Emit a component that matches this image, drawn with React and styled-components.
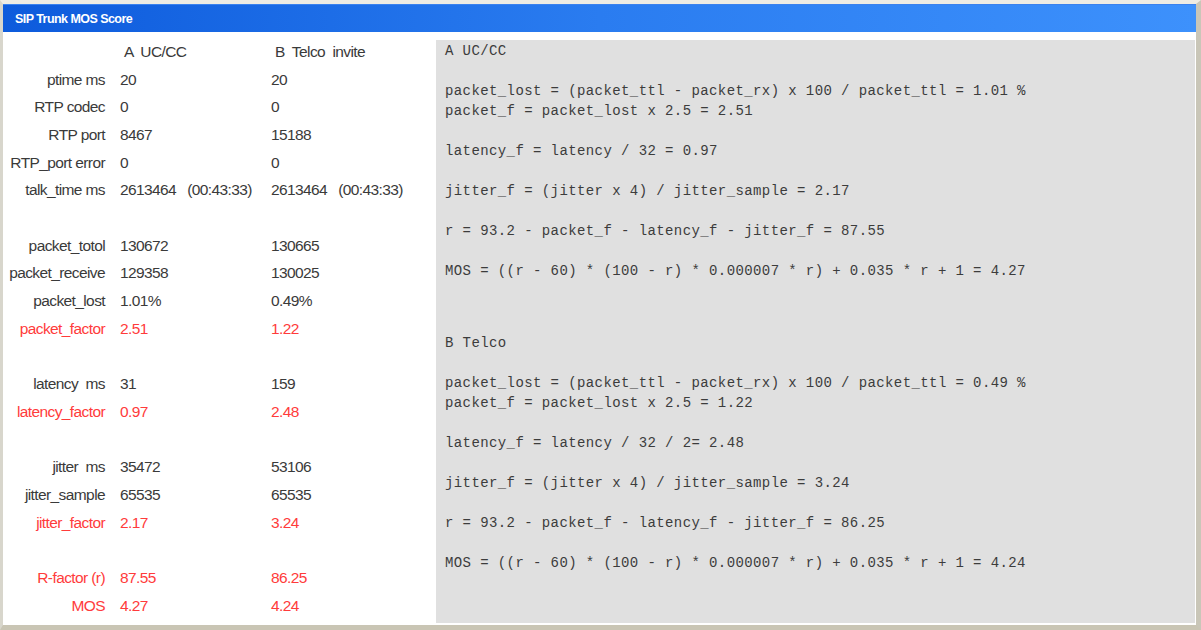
import React from "react";
import styled, { createGlobalStyle } from "styled-components";

const GlobalStyle = createGlobalStyle`
  html, body {
    margin: 0;
    padding: 0;
    background: #ece9d8;
  }
`;

const Frame = styled.div`
  width: 1201px;
  height: 630px;
  box-sizing: border-box;
  display: flex;
  flex-direction: column;
  background: #ece9d8;
  border-top: 4px solid #eeece4;
  border-left: 3px solid #d8d6cc;
  border-right: 5px solid #c9c6b8;
  border-bottom: 5px solid #c9c5b4;
`;

const TitleBar = styled.div`
  height: 28px;
  display: flex;
  align-items: center;
  padding-left: 12px;
  background: linear-gradient(to right, #0d5bdc, #2a7cf0 50%, #3d91fc);
  border-top: 1px solid #3b82ee;
  box-sizing: border-box;
  color: #fff;
  font-family: "Liberation Sans", Arial, sans-serif;
  font-weight: bold;
  font-size: 12.5px;
  letter-spacing: -0.55px;
`;

const Body = styled.div`
  flex: 1;
  display: flex;
  background: #fff;
  min-height: 0;
`;

const Table = styled.div`
  width: 433px;
  flex-shrink: 0;
  padding-top: 6px;
  display: grid;
  grid-template-columns: 102px 136px 1fr;
  grid-auto-rows: 27.7px;
  column-gap: 15px;
  align-content: start;
  font-family: "Liberation Sans", Arial, sans-serif;
  font-size: 15.5px;
  letter-spacing: -0.6px;
  color: #3a3a3a;
`;

const Cell = styled.div`
  display: flex;
  align-items: center;
  white-space: pre;
  color: ${(p) => (p.$red ? "#ff3b3b" : "#3a3a3a")};
  justify-content: ${(p) => (p.$label ? "flex-end" : "flex-start")};
  padding-left: ${(p) => (p.$head ? "4px" : "0")};
`;

const Blank = styled.div`
  grid-column: 1 / -1;
`;

const Formulas = styled.div`
  flex: 1;
  margin: 8px 1px 2px 0;
  padding: 1px 9px 0;
  background: #e0e0e0;
  font-family: "Liberation Mono", "Courier New", monospace;
  font-size: 14px;
  letter-spacing: 0.4px;
  line-height: 20px;
  color: #3c3c3c;
`;

const Section = styled.div`
  white-space: pre;
  margin-bottom: 52px;
`;

const rows = [
  ["ptime ms", "20", "20"],
  ["RTP codec", "0", "0"],
  ["RTP port", "8467", "15188"],
  ["RTP_port error", "0", "0"],
  ["talk_time ms", "2613464   (00:43:33)", "2613464   (00:43:33)"],
  null,
  ["packet_totol", "130672", "130665"],
  ["packet_receive", "129358", "130025"],
  ["packet_lost", "1.01%", "0.49%"],
  ["packet_factor", "2.51", "1.22", true],
  null,
  ["latency  ms", "31", "159"],
  ["latency_factor", "0.97", "2.48", true],
  null,
  ["jitter  ms", "35472", "53106"],
  ["jitter_sample", "65535", "65535"],
  ["jitter_factor", "2.17", "3.24", true],
  null,
  ["R-factor (r)", "87.55", "86.25", true],
  ["MOS", "4.27", "4.24", true],
];

const sectionA = `A UC/CC

packet_lost = (packet_ttl - packet_rx) x 100 / packet_ttl = 1.01 %
packet_f = packet_lost x 2.5 = 2.51

latency_f = latency / 32 = 0.97

jitter_f = (jitter x 4) / jitter_sample = 2.17

r = 93.2 - packet_f - latency_f - jitter_f = 87.55

MOS = ((r - 60) * (100 - r) * 0.000007 * r) + 0.035 * r + 1 = 4.27`;

const sectionB = `B Telco

packet_lost = (packet_ttl - packet_rx) x 100 / packet_ttl = 0.49 %
packet_f = packet_lost x 2.5 = 1.22

latency_f = latency / 32 / 2= 2.48

jitter_f = (jitter x 4) / jitter_sample = 3.24

r = 93.2 - packet_f - latency_f - jitter_f = 86.25

MOS = ((r - 60) * (100 - r) * 0.000007 * r) + 0.035 * r + 1 = 4.24`;

export default function App() {
  return (
    <>
      <GlobalStyle />
      <Frame>
        <TitleBar>SIP Trunk MOS Score</TitleBar>
        <Body>
          <Table>
            <Cell $label />
            <Cell $head>A  UC/CC</Cell>
            <Cell $head>B  Telco  invite</Cell>
            {rows.map((r, i) =>
              r ? (
                <React.Fragment key={i}>
                  <Cell $label $red={r[3]}>{r[0]}</Cell>
                  <Cell $red={r[3]}>{r[1]}</Cell>
                  <Cell $red={r[3]}>{r[2]}</Cell>
                </React.Fragment>
              ) : (
                <Blank key={i} />
              )
            )}
          </Table>
          <Formulas>
            <Section>{sectionA}</Section>
            <Section>{sectionB}</Section>
          </Formulas>
        </Body>
      </Frame>
    </>
  );
}
